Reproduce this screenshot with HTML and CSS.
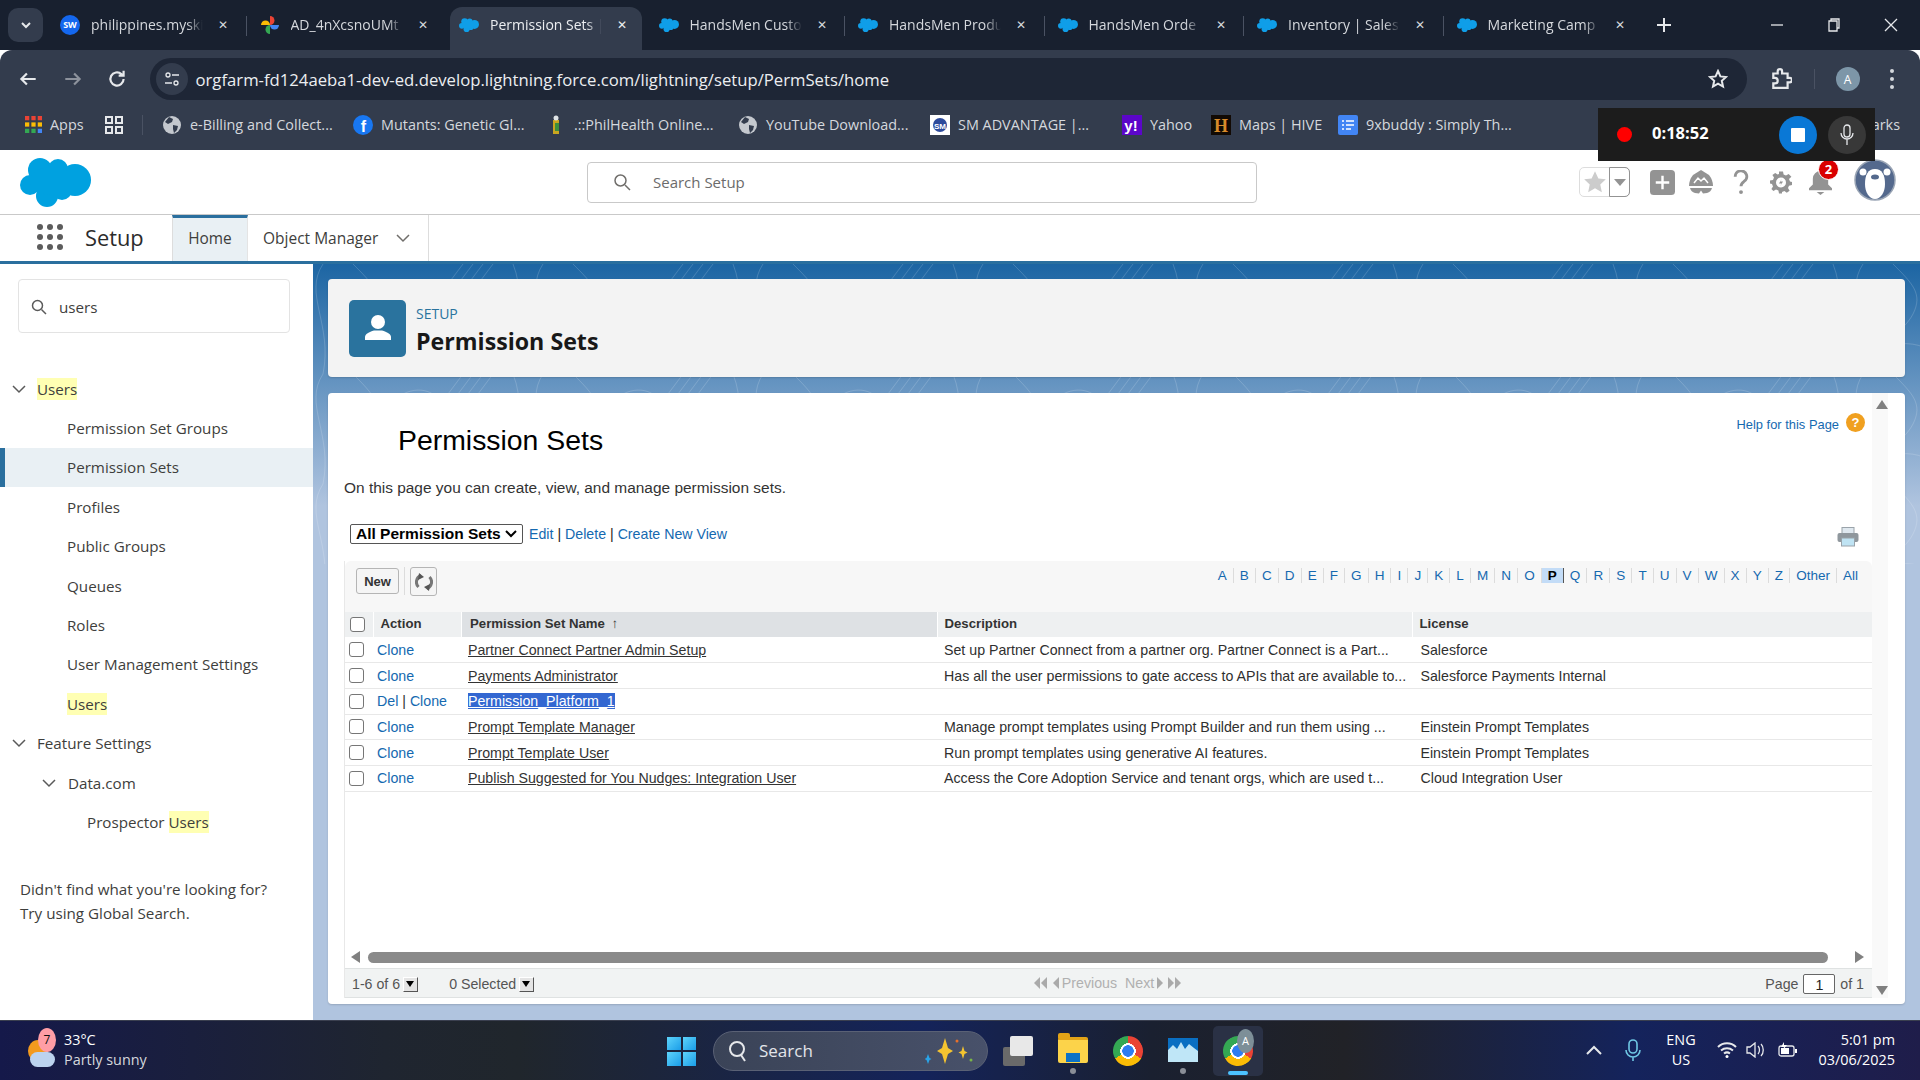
FILE: index.html
```html
<!DOCTYPE html>
<html lang="en">
<head>
  <meta charset="UTF-8" />
  <title>Permission Sets | Salesforce</title>
  <link rel="stylesheet" href="styles.css">
</head>
<body>

  <svg class="defs" width="0" height="0">
    <symbol id="cloud" viewBox="0 0 71 50">
      <circle cx="20" cy="13" r="12"/><circle cx="38" cy="12" r="10"/><circle cx="55" cy="23" r="16"/>
      <circle cx="27" cy="39" r="11"/><circle cx="10" cy="28" r="10"/><circle cx="42" cy="33" r="10"/>
      <ellipse cx="32" cy="24" rx="22" ry="14"/>
    </symbol>
    <symbol id="globe" viewBox="0 0 20 20">
      <circle cx="10" cy="10" r="9" fill="#c4c8ce"/>
      <path d="M7 2l4 2-1 3-4 2-3-2zM11 10l5 1-1 4-3 3-1-4z" fill="#333c4d"/>
    </symbol>
  </svg>

  <!-- Browser tabs -->
  <div class="tabstrip">
    <button class="tab-search"><svg width="12" height="12" viewBox="0 0 12 12"><path d="M2 4l4 4 4-4" class="line-w2"/></svg></button>
    <div class="tab"><span class="fav-sw">SW</span><span class="tab-title">philippines.myski</span><span class="tab-x">✕</span></div>
    <div class="tab"><svg class="fav" viewBox="0 0 20 20"><path d="M10 10V1a4.500 4.500 0 0 1 0 9z" fill="#ea4335"/><path d="M10 10h9a4.500 4.500 0 0 1-9 0z" fill="#4285f4"/><path d="M10 10v9a4.500 4.500 0 0 1 0-9z" fill="#34a853"/><path d="M10 10H1a4.500 4.500 0 0 1 9 0z" fill="#fbbc05"/></svg><span class="tab-title">AD_4nXcsnoUMt</span><span class="tab-x">✕</span></div>
    <div class="tab active"><svg class="fav sf"><use href="#cloud"/></svg><span class="tab-title">Permission Sets |</span><span class="tab-x">✕</span></div>
    <div class="tab"><svg class="fav sf"><use href="#cloud"/></svg><span class="tab-title">HandsMen Custo</span><span class="tab-x">✕</span></div>
    <div class="tab"><svg class="fav sf"><use href="#cloud"/></svg><span class="tab-title">HandsMen Produ</span><span class="tab-x">✕</span></div>
    <div class="tab"><svg class="fav sf"><use href="#cloud"/></svg><span class="tab-title">HandsMen Orde</span><span class="tab-x">✕</span></div>
    <div class="tab"><svg class="fav sf"><use href="#cloud"/></svg><span class="tab-title">Inventory | Sales</span><span class="tab-x">✕</span></div>
    <div class="tab"><svg class="fav sf"><use href="#cloud"/></svg><span class="tab-title">Marketing Camp</span><span class="tab-x">✕</span></div>
    <svg class="tab-plus" width="14" height="14" viewBox="0 0 14 14"><path d="M7 0v14M0 7h14" class="line-w2"/></svg>
    <div class="win-controls">
      <svg width="14" height="14" viewBox="0 0 14 14"><path d="M1 7h12" class="line-w1"/></svg>
      <svg width="14" height="14" viewBox="0 0 14 14"><path d="M2 3h8v10H2zM4 3V1h8v9h-2" class="line-w1"/></svg>
      <svg width="14" height="14" viewBox="0 0 14 14"><path d="M1 1l12 12M13 1L1 13" class="line-w1"/></svg>
    </div>
  </div>

  <!-- Address bar -->
  <div class="toolbar">
    <svg class="tool" viewBox="0 0 20 20"><path d="M17 10H4M9 5l-5 5 5 5" class="line-w2"/></svg>
    <svg class="tool dim" viewBox="0 0 20 20"><path d="M3 10h13M11 5l5 5-5 5" class="line-w2"/></svg>
    <svg class="tool" viewBox="0 0 20 20"><path d="M16 10a6 6 0 1 1-2-4.500L16 7M16 2.500V7h-4.500" class="line-w2"/></svg>
    <div class="omnibox">
      <span class="site-info"><svg width="18" height="18" viewBox="0 0 18 18"><circle cx="5" cy="5" r="2" class="line-w1"/><path d="M9 5h7M2 13h7" class="line-w1"/><circle cx="13" cy="13" r="2" class="line-w1"/></svg></span>
      <span class="url">orgfarm-fd124aeba1-dev-ed.develop.lightning.force.com/lightning/setup/PermSets/home</span>
      <svg class="star" width="20" height="20" viewBox="0 0 20 20"><path d="M10 2l2.400 5.400 5.600.6-4.200 3.800 1.200 5.700L10 14.600l-5 2.900 1.200-5.700L2 8l5.600-.6z" class="line-w2"/></svg>
    </div>
    <svg class="tool ext" viewBox="0 0 20 20"><path d="M3 5h4V3a2 2 0 0 1 4 0v2h5v4h2a2 2 0 0 1 0 4h-2v5H3v-4h1.500a2.500 2.500 0 0 0 0-5H3z" class="line-w2"/></svg>
    <span class="tool-sep"></span>
    <span class="profile">A</span>
    <span class="kebab"><i></i><i></i><i></i></span>
  </div>

  <!-- Bookmarks -->
  <div class="bookmarks">
    <span class="bm bm-apps">
      <svg class="bm-ico" viewBox="0 0 16 16">
        <g fill="#ea4335"><rect x="0" y="0" width="4" height="4"/><rect x="6" y="0" width="4" height="4"/><rect x="12" y="0" width="4" height="4"/></g>
        <g fill="#fbbc05"><rect x="0" y="6" width="4" height="4"/><rect x="6" y="6" width="4" height="4"/><rect x="12" y="6" width="4" height="4"/></g>
        <g fill="#34a853"><rect x="0" y="12" width="4" height="4"/><rect x="6" y="12" width="4" height="4"/></g><rect x="12" y="12" width="4" height="4" fill="#4285f4"/>
      </svg>Apps</span>
    <svg class="bm-grid" viewBox="0 0 18 18"><path d="M1 1h6v6H1zM11 1h6v6h-6zM1 11h6v6H1zM11 11h6v6h-6z" class="line-w2"/></svg>
    <span class="bm-sep"></span>
    <span class="bm w-e"><svg class="bm-ico"><use href="#globe"/></svg>e-Billing and Collect...</span>
    <span class="bm w-m"><svg class="bm-ico" viewBox="0 0 20 20"><circle cx="10" cy="10" r="10" fill="#1877f2"/><text x="10.500" y="17" class="fb-f">f</text></svg>Mutants: Genetic Gl...</span>
    <span class="bm w-p"><svg class="bm-ico" viewBox="0 0 20 20"><rect x="7" y="5" width="6" height="14" fill="#c9a61f"/><circle cx="10" cy="3" r="2.500" fill="#dfe3e6"/><rect x="9" y="8" width="4" height="8" fill="#3c8f3c"/></svg>.::PhilHealth Online...</span>
    <span class="bm w-y"><svg class="bm-ico"><use href="#globe"/></svg>YouTube Download...</span>
    <span class="bm w-s"><svg class="bm-ico" viewBox="0 0 20 20"><rect width="20" height="20" fill="#fff"/><circle cx="10" cy="10" r="7" fill="#2d4a9b"/><text x="10" y="14" class="sm-t">SM</text></svg>SM ADVANTAGE |...</span>
    <span class="bm w-h"><svg class="bm-ico" viewBox="0 0 20 20"><rect width="20" height="20" fill="#5b06c9"/><text x="9" y="16" class="yh-t">y!</text></svg>Yahoo</span>
    <span class="bm w-v"><svg class="bm-ico" viewBox="0 0 20 20"><rect width="20" height="20" fill="#120a04"/><text x="10" y="17" class="hv-t">H</text></svg>Maps | HIVE</span>
    <span class="bm"><svg class="bm-ico" viewBox="0 0 20 20"><rect width="20" height="20" rx="2" fill="#4285f4"/><path d="M4 6h2M8 6h8M4 10h2M8 10h8M4 14h2M8 14h5" class="line-doc"/></svg>9xbuddy : Simply Th...</span>
    <span class="bm bm-more">arks</span>
  </div>

  <!-- Screen recorder overlay -->
  <div class="recorder">
    <span class="rec-dot"></span>
    <span class="rec-time">0:18:52</span>
    <span class="rec-stop"><i></i></span>
    <span class="rec-mic"><svg width="18" height="24" viewBox="0 0 18 24"><rect x="6" y="2" width="6" height="12" rx="3" class="line-w1"/><path d="M3 10a6 6 0 0 0 12 0M9 16v6" class="line-w1"/></svg></span>
  </div>

  <!-- Salesforce global header -->
  <header class="sf-top">
    <svg class="sf-logo"><use href="#cloud"/></svg>
    <div class="global-search">
      <svg width="18" height="18" viewBox="0 0 18 18"><circle cx="7.500" cy="7.500" r="5.500" class="ico-gray"/><path d="M12 12l5 5" class="ico-gray"/></svg>
      <span>Search Setup</span>
    </div>
    <div class="global-actions">
      <div class="fav-group">
        <span class="fav-star"><svg width="24" height="24" viewBox="0 0 20 20"><path d="M10 1l2.800 6 6.200.7-4.600 4.300 1.300 6.500L10 15.200l-5.700 3.300L5.600 12 1 7.700 7.200 7z" fill="#ccc"/></svg></span>
        <span class="fav-drop"><i></i></span>
      </div>
      <svg class="act plus" viewBox="0 0 26 26"><rect width="26" height="26" rx="4" fill="#939393"/><path d="M13 6v14M6 13h14" stroke="#fff" stroke-width="2.500"/></svg>
      <svg class="act trail" viewBox="0 0 24 24"><path d="M12 0l8 5q4 5 4 11H0q0-6 4-11z" fill="#939393"/><path d="M5 13l4-5 3 3 3-3 4 5" fill="none" stroke="#fff" stroke-width="1.500"/><path d="M1 18h22q-1 4-5 5l-4 .5-2-3-2 3-4-.5q-4-1-5-5z" fill="#939393"/></svg>
      <svg class="act help" viewBox="0 0 16 26"><path d="M2 7a6 6 0 1 1 9 5c-2 1.500-3 2.500-3 5" fill="none" stroke="#939393" stroke-width="3"/><circle cx="8" cy="23" r="2" fill="#939393"/></svg>
      <svg class="act gear" viewBox="0 0 22 22"><path d="M9 0h4l.6 3 2.400 1 2.600-1.600 2.800 2.800L19 7.600l1 2.400 2 .6v3l-3 .6-1 2.400 1.600 2.600-2.800 2-2.400-1.600-2.400 1L12 22H9l-.6-3-2.400-1-2.600 1.600-2-2L3 15l-1-2.400L0 12V9l3-.6L4 6 2.400 3.400l2.800-2L7.600 3 9 2.400z" fill="#939393"/><circle cx="11" cy="11" r="5" fill="#fff"/><path d="M12 7l-3 5h2.500L10 15l3-5h-2.500z" fill="#939393"/></svg>
      <div class="bell">
        <svg width="23" height="24" viewBox="0 0 24 25"><path d="M12 0a8 8 0 0 1 8 8v6l4 4v2H0v-2l4-4V8a8 8 0 0 1 8-8z" fill="#939393"/><path d="M8 22h8l-4 3z" fill="#939393"/></svg>
        <span class="bell-badge">2</span>
      </div>
      <svg class="avatar" viewBox="0 0 42 42">
        <circle cx="21" cy="21" r="20" fill="#54698d" stroke="#9aa5b5" stroke-width="1.500"/>
        <circle cx="9" cy="13" r="3.500" fill="#fff"/><circle cx="33" cy="13" r="3.500" fill="#fff"/>
        <path d="M21 10c7 0 10 6 10 15 0 8-4 15-10 15s-10-7-10-15c0-9 3-15 10-15z" fill="#fff"/>
        <ellipse cx="21" cy="18" rx="4" ry="2.500" fill="#54698d"/>
      </svg>
    </div>
  </header>

  <nav class="sf-nav">
    <span class="launcher"><i></i><i></i><i></i><i></i><i></i><i></i><i></i><i></i><i></i></span>
    <span class="app-name">Setup</span>
    <a class="nav-tab current">Home</a>
    <a class="nav-tab">Object Manager<svg width="14" height="14" viewBox="0 0 14 14"><path d="M1 4l6 6 6-6" class="ico-gray"/></svg></a>
  </nav>

  <div class="sf-body">

    <!-- Setup tree -->
    <aside class="sidebar">
      <div class="quick-find">
        <svg width="16" height="16" viewBox="0 0 16 16"><circle cx="6.500" cy="6.500" r="5" class="ico-dark"/><path d="M10.500 10.500L15 15" class="ico-dark"/></svg>
        <span>users</span>
      </div>
      <ul class="tree">
        <li class="lvl0"><svg class="caret" viewBox="0 0 14 14"><path d="M1 4l6 6 6-6" class="ico-dark"/></svg><mark>Users</mark></li>
        <li class="lvl1">Permission Set Groups</li>
        <li class="lvl1 selected">Permission Sets</li>
        <li class="lvl1">Profiles</li>
        <li class="lvl1">Public Groups</li>
        <li class="lvl1">Queues</li>
        <li class="lvl1">Roles</li>
        <li class="lvl1">User Management Settings</li>
        <li class="lvl1"><mark>Users</mark></li>
        <li class="lvl0"><svg class="caret" viewBox="0 0 14 14"><path d="M1 4l6 6 6-6" class="ico-dark"/></svg>Feature Settings</li>
        <li class="lvl1b"><svg class="caret" viewBox="0 0 14 14"><path d="M1 4l6 6 6-6" class="ico-dark"/></svg>Data.com</li>
        <li class="lvl2">Prospector <mark>Users</mark></li>
      </ul>
      <p class="not-found">Didn't find what you're looking for?<br>Try using Global Search.</p>
    </aside>

    <main class="main">
      <svg class="topo" width="1607" height="300">
        <defs>
          <pattern id="topo" width="220" height="110" patternUnits="userSpaceOnUse">
            <path d="M10 0c-20 30 10 60 0 110M40 0c20 20 30 30 20 50s-40 30-30 60M90 20c20-10 40 0 40 20s-30 30-40 10 0-30 0-30M150 0l-30 40M160 0l-30 40M170 0l-30 40M180 0l-30 40M200 110c-20-30 20-60 0-110M20 90c30-20 60-10 90 20M130 110c10-20 40-30 70-20" fill="none" stroke="#fff" stroke-opacity=".16"/>
          </pattern>
        </defs>
        <rect width="1607" height="300" fill="url(#topo)"/>
      </svg>

      <section class="page-header">
        <span class="ph-icon"><svg width="32" height="32" viewBox="0 0 32 32"><circle cx="16" cy="10" r="7" fill="#fff"/><path d="M3 28v-3c0-3 4-5 9-6.500h8c5 1.500 9 3.500 9 6.500v3z" fill="#fff"/></svg></span>
        <div class="ph-text">
          <div class="ph-crumb">SETUP</div>
          <div class="ph-title">Permission Sets</div>
        </div>
      </section>

      <section class="content">
        <div class="classic">
          <div class="page-head">
            <h1>Permission Sets</h1>
            <a class="help-link">Help for this Page<span class="help-q">?</span></a>
          </div>
          <p class="intro">On this page you can create, view, and manage permission sets.</p>

          <div class="view-row">
            <span class="view-select">All Permission Sets<svg width="12" height="8" viewBox="0 0 12 8"><path d="M1 1l5 5 5-5" class="line-black"/></svg></span>
            <a>Edit</a> | <a>Delete</a> | <a>Create New View</a>
            <svg class="printer" width="22" height="20" viewBox="0 0 22 20"><rect x="5" y="0.500" width="12" height="7" fill="#dfe8ef" stroke="#9aa3aa"/><rect x="0.500" y="6" width="21" height="9" rx="2" fill="#8f979d"/><rect x="4.500" y="11" width="13" height="8" fill="#bfe3f3" stroke="#9aa3aa"/></svg>
          </div>

          <div class="list-panel">
            <div class="list-tools">
              <button class="btn-new">New</button>
              <span class="tool-div"></span>
              <button class="btn-refresh"><svg width="18" height="18" viewBox="0 0 18 18"><path d="M3.500 14A7 7 0 0 1 6 2.500" class="refresh-a"/><path d="M14.500 4A7 7 0 0 1 12 15.500" class="refresh-b"/><path d="M4 0l5 4-6 3z" fill="#555"/><path d="M14 18l-5-4 6-3z" fill="#555"/></svg></button>
              <div class="alpha">
                <a>A</a><a>B</a><a>C</a><a>D</a><a>E</a><a>F</a><a>G</a><a>H</a><a>I</a><a>J</a><a>K</a><a>L</a><a>M</a><a>N</a><a>O</a><a class="on">P</a><a>Q</a><a>R</a><a>S</a><a>T</a><a>U</a><a>V</a><a>W</a><a>X</a><a>Y</a><a>Z</a><a>Other</a><a>All</a>
              </div>
            </div>

            <table class="list-table">
              <colgroup><col class="c-check"><col class="c-action"><col class="c-name"><col class="c-desc"><col class="c-lic"></colgroup>
              <thead>
                <tr><th><span class="cb"></span></th><th class="th-action">Action</th><th class="sorted">Permission Set Name <span class="sort-arrow">↑</span></th><th>Description</th><th>License</th></tr>
              </thead>
              <tbody>
                <tr><td><span class="cb"></span></td><td><a>Clone</a></td><td><u>Partner Connect Partner Admin Setup</u></td><td>Set up Partner Connect from a partner org. Partner Connect is a Part...</td><td>Salesforce</td></tr>
                <tr><td><span class="cb"></span></td><td><a>Clone</a></td><td><u>Payments Administrator</u></td><td>Has all the user permissions to gate access to APIs that are available to...</td><td>Salesforce Payments Internal</td></tr>
                <tr><td><span class="cb"></span></td><td><a>Del</a> | <a>Clone</a></td><td><u class="picked">Permission_Platform_1</u></td><td></td><td></td></tr>
                <tr><td><span class="cb"></span></td><td><a>Clone</a></td><td><u>Prompt Template Manager</u></td><td>Manage prompt templates using Prompt Builder and run them using ...</td><td>Einstein Prompt Templates</td></tr>
                <tr><td><span class="cb"></span></td><td><a>Clone</a></td><td><u>Prompt Template User</u></td><td>Run prompt templates using generative AI features.</td><td>Einstein Prompt Templates</td></tr>
                <tr><td><span class="cb"></span></td><td><a>Clone</a></td><td><u>Publish Suggested for You Nudges: Integration User</u></td><td>Access the Core Adoption Service and tenant orgs, which are used t...</td><td>Cloud Integration User</td></tr>
              </tbody>
            </table>

            <div class="hscroll">
              <i class="arr-left"></i>
              <span class="hthumb"></span>
              <i class="arr-right"></i>
            </div>

            <div class="pager">
              <div class="pg-left"><span>1-6 of 6</span><span class="pg-drop"></span><span class="pg-sel">0 Selected</span><span class="pg-drop"></span></div>
              <div class="pg-mid"><i class="tri-l"></i><i class="tri-l"></i><i class="tri-l gap"></i>Previous<span class="pg-next">Next</span><i class="tri-r gap"></i><i class="tri-r"></i><i class="tri-r"></i></div>
              <div class="pg-right">Page <span class="pg-input">1</span> of 1</div>
            </div>
          </div>
        </div>
        <div class="vscroll"><i class="arr-up"></i><i class="arr-down"></i></div>
      </section>
    </main>
  </div>

  <!-- Windows taskbar -->
  <footer class="taskbar">
    <div class="weather">
      <span class="wx-icon"><i class="wx-sun"></i><i class="wx-cloud"></i><b class="wx-badge">7</b></span>
      <div><div>33°C</div><div class="wx-sub">Partly sunny</div></div>
    </div>
    <div class="task-center">
      <span class="win-logo"><i></i><i></i><i></i><i></i></span>
      <div class="task-search">
        <svg width="20" height="22" viewBox="0 0 20 22"><circle cx="9" cy="9" r="7" class="line-w2"/><path d="M13 15l4 6" class="line-w2"/></svg>
        <span>Search</span>
        <svg class="sparkle" width="50" height="30" viewBox="0 0 50 30"><path d="M20 2l3 10 5 3-5 3-3 10-3-10-5-3 5-3z" fill="#f4c430"/><path d="M38 10l1.500 5 3 1.500-3 1.500-1.500 5-1.500-5-3-1.500 3-1.500z" fill="#f4c430"/><path d="M3 18l1.500 4 2 1-2 1L3 28l-1.500-4-2-1 2-1z" fill="#2aa4e8"/><circle cx="32" cy="5" r="1.500" fill="#e8702a"/><circle cx="46" cy="24" r="1.500" fill="#7ab648"/></svg>
      </div>
      <span class="task-app"><span class="ta-view"><i></i><i></i></span></span>
      <span class="task-app dot"><span class="ta-folder"><i></i></span></span>
      <span class="task-app"><span class="ta-chrome"></span></span>
      <span class="task-app dot"><span class="ta-chart"><svg width="30" height="24" viewBox="0 0 30 24"><rect width="30" height="24" fill="#0a6fc2"/><path d="M0 24V12l5-5 4 4 4-7 4 7 4-5 5 4 4 3v11z" fill="#bfe6f7"/></svg></span></span>
      <span class="task-app active"><span class="ta-chrome"></span><b class="ta-a">A</b></span>
    </div>
    <div class="tray">
      <svg width="18" height="10" viewBox="0 0 18 10"><path d="M2 9l7-7 7 7" class="line-w2"/></svg>
      <svg class="tray-mic" width="16" height="22" viewBox="0 0 16 22"><rect x="4" y="1" width="8" height="13" rx="4" class="line-mic"/><path d="M1 11a7 7 0 0 0 14 0M8 18v4" class="line-mic"/></svg>
      <div class="tray-lang">ENG<br>US</div>
      <svg class="tray-wifi" width="20" height="16" viewBox="0 0 20 16"><path d="M1 5c5-5 13-5 18 0M4 8.500c3.500-3 8.500-3 12 0M7 11.500c2-1.500 4-1.500 6 0" class="line-w2"/><circle cx="10" cy="14.500" r="1.500" fill="#fff"/></svg>
      <svg width="20" height="16" viewBox="0 0 20 16"><path d="M1 5h3l5-4v14l-5-4H1zM12 4c2 2 2 6 0 8M15 2c3 3 3 9 0 12" class="line-w1"/></svg>
      <svg class="tray-bat" width="20" height="16" viewBox="0 0 20 16"><rect x="1" y="4" width="15" height="10" rx="2" class="line-w1"/><rect x="3" y="6" width="8" height="6" fill="#fff"/><rect x="17" y="7" width="2" height="4" fill="#fff"/><path d="M6 0L3 5h3L5 8l4-5H6z" fill="#fff"/></svg>
      <div class="clock">5:01 pm<br>03/06/2025</div>
    </div>
  </footer>

</body>
</html>
```

FILE: styles.css
```css
* {
  box-sizing: border-box;
}

html, body {
  margin: 0;
  width: 1920px;
  height: 1080px;
  overflow: hidden;
}

body {
  display: flex;
  flex-direction: column;
  position: relative;
  font-family: "Open Sans", sans-serif;
  background: #fff;
}

.defs {
  position: absolute;
}

button {
  font-family: inherit;
  padding: 0;
}

/* shared strokes */
.line-w1 { fill: none; stroke: #e6e8eb; stroke-width: 1.3; }
.line-w2 { fill: none; stroke: #e6e8eb; stroke-width: 2; }
.line-doc { fill: none; stroke: #fff; stroke-width: 1.5; }
.line-black { fill: none; stroke: #000; stroke-width: 2; }
.line-mic { fill: none; stroke: #6fc7e4; stroke-width: 1.6; }
.ico-gray { fill: none; stroke: #706e6b; stroke-width: 1.5; }
.ico-dark { fill: none; stroke: #5a5a5a; stroke-width: 1.5; }

/* Tab strip */
.tabstrip {
  height: 50px;
  background: #18202f;
  display: flex;
  align-items: flex-end;
  padding-left: 8px;
  color: #d5d8dd;
  flex-shrink: 0;
}

.tab-search {
  width: 35px;
  height: 34px;
  margin: 0 8px 8px 0;
  border: none;
  border-radius: 10px;
  background: #333c4d;
  display: flex;
  align-items: center;
  justify-content: center;
  flex-shrink: 0;
}

.tab {
  width: 199.5px;
  height: 43px;
  flex-shrink: 0;
  display: flex;
  align-items: center;
  padding: 0 14px 0 9px;
  font-size: 14px;
  position: relative;
}

.tab + .tab::before {
  content: "";
  position: absolute;
  left: -5px;
  top: 9px;
  height: 20px;
  width: 1px;
  background: #4a5263;
}

.tab.active {
  width: 192px;
  background: #333c4d;
  border-radius: 12px 12px 0 0;
  color: #eceef1;
}

.tab.active + .tab {
  width: 207px;
  padding-left: 16.5px;
}

.tab.active::before,
.tab.active + .tab::before {
  display: none;
}

.tab > * {
  position: relative;
  top: -4px;
}

.fav {
  width: 20px;
  height: 20px;
  flex-shrink: 0;
}

.fav.sf {
  fill: #0f9ee8;
}

.fav-sw {
  width: 20px;
  height: 20px;
  flex-shrink: 0;
  border-radius: 50%;
  background: #1467ee;
  color: #fff;
  font-size: 9px;
  font-weight: 700;
  display: flex;
  align-items: center;
  justify-content: center;
}

.tab-title {
  width: 112px;
  margin-left: 11px;
  white-space: nowrap;
  -webkit-mask-image: linear-gradient(to right, #000 86%, transparent);
  mask-image: linear-gradient(to right, #000 86%, transparent);
}

.tab-x {
  margin-left: 15px;
  font-size: 12px;
}

.tab-plus {
  margin: 0 0 18px 10px;
  flex-shrink: 0;
}

.win-controls {
  margin-left: auto;
  width: 249px;
  height: 50px;
  padding: 18px 22px 0 99px;
  display: flex;
  justify-content: space-between;
  align-self: flex-start;
}

/* Toolbar */
.toolbar {
  height: 50px;
  background: #333c4d;
  border-radius: 12px 12px 0 0;
  display: flex;
  align-items: center;
  padding: 8px 0 0 17px;
  flex-shrink: 0;
}

.tool {
  width: 22px;
  height: 22px;
  margin-right: 22.5px;
  flex-shrink: 0;
}

.tool.dim {
  opacity: .5;
}

.omnibox {
  width: 1597px;
  height: 42px;
  margin-left: -1px;
  background: #1e2636;
  border-radius: 21px;
  display: flex;
  align-items: center;
  padding: 0 18.5px 0 6px;
  flex-shrink: 0;
}

.site-info {
  width: 32px;
  height: 32px;
  border-radius: 50%;
  background: #333c4d;
  display: flex;
  align-items: center;
  justify-content: center;
}

.url {
  margin-left: 8px;
  font-size: 16.7px;
  color: #eceef1;
  white-space: nowrap;
}

.star {
  margin-left: auto;
}

.tool.ext {
  margin: 0 0 0 23.5px;
}

.tool-sep {
  width: 1px;
  height: 20px;
  background: #4a5263;
  margin-left: 21.5px;
}

.profile {
  width: 24px;
  height: 24px;
  margin-left: 21px;
  border-radius: 50%;
  background: #7d96a8;
  color: #fff;
  font-size: 12px;
  display: flex;
  align-items: center;
  justify-content: center;
}

.kebab {
  margin-left: 30px;
  display: flex;
  flex-direction: column;
  gap: 4px;
}

.kebab i {
  width: 4px;
  height: 4px;
  border-radius: 50%;
  background: #d5d8dd;
}

/* Bookmarks */
.bookmarks {
  height: 50px;
  background: #333c4d;
  display: flex;
  align-items: center;
  padding: 0 0 0 25px;
  font-size: 14.4px;
  color: #d5d8dd;
  white-space: nowrap;
  flex-shrink: 0;
  border-bottom: 1px solid #333c4d;
}

.bm {
  display: flex;
  align-items: center;
  gap: 8px;
}

.bm-ico {
  width: 20px;
  height: 20px;
  flex-shrink: 0;
}

.bm-apps {
  width: 80px;
}

.bm-apps .bm-ico {
  width: 17px;
  height: 17px;
}

.bm-grid {
  width: 18px;
  height: 18px;
}

.bm-sep {
  width: 1px;
  height: 20px;
  background: #4a5263;
  margin: 0 19px 0 19px;
}

.w-e { width: 191px; }
.w-m { width: 193px; }
.w-p { width: 192px; }
.w-y { width: 192px; }
.w-s { width: 192px; }
.w-h { width: 89px; }
.w-v { width: 127px; }

.bm-more {
  margin-left: auto;
  padding-right: 20px;
}

.fb-f {
  font: 700 16px "Liberation Sans", sans-serif;
  fill: #fff;
  text-anchor: middle;
}

.sm-t {
  font: 700 8px "Liberation Sans", sans-serif;
  fill: #fff;
  text-anchor: middle;
}

.yh-t {
  font: 700 15px "Liberation Sans", sans-serif;
  fill: #fff;
  text-anchor: middle;
}

.hv-t {
  font: 700 18px "Liberation Serif", serif;
  fill: #d88a2a;
  text-anchor: middle;
}

/* Recorder overlay */
.recorder {
  position: absolute;
  left: 1598px;
  top: 108px;
  width: 277px;
  height: 53px;
  background: #1c1c1c;
  display: flex;
  align-items: center;
  padding-left: 19px;
  color: #fff;
  z-index: 5;
}

.rec-dot {
  width: 15px;
  height: 15px;
  border-radius: 50%;
  background: #f00;
}

.rec-time {
  margin: -5px 0 0 20px;
  width: 115px;
  font-size: 16.5px;
  font-weight: 700;
}

.rec-stop {
  width: 38px;
  height: 38px;
  margin-left: 12px;
  border-radius: 50%;
  background: #0a78d6;
  display: flex;
  align-items: center;
  justify-content: center;
}

.rec-stop i {
  width: 14px;
  height: 14px;
  background: #fff;
  border-radius: 1px;
}

.rec-mic {
  width: 38px;
  height: 38px;
  margin-left: 11px;
  border-radius: 50%;
  background: #383838;
  display: flex;
  align-items: center;
  justify-content: center;
}

/* Salesforce header */
.sf-top {
  height: 65px;
  background: #fff;
  border-bottom: 1px solid #c9c9c9;
  display: flex;
  align-items: center;
  position: relative;
  flex-shrink: 0;
}

.sf-logo {
  width: 71px;
  height: 50px;
  margin-left: 20px;
  fill: #00a1e0;
}

.global-search {
  width: 670px;
  height: 41px;
  margin: 0 0 0 496px;
  border: 1px solid #c9c9c9;
  border-radius: 4px;
  display: flex;
  align-items: center;
  padding-left: 25px;
  color: #6b6b6b;
  font-size: 15px;
  gap: 22px;
}

.global-actions {
  display: flex;
  align-items: center;
  margin-left: 322px;
}

.fav-group {
  display: flex;
  height: 30px;
  width: 51px;
  border: 1px solid #ddd;
  border-radius: 5px;
  margin-top: 0;
}

.fav-star {
  width: 29px;
  display: flex;
  align-items: center;
  justify-content: center;
}

.fav-drop {
  width: 21px;
  border: 1px solid #939393;
  border-radius: 0 5px 5px 0;
  margin: -1px -1px -1px 0;
  display: flex;
  align-items: center;
  justify-content: center;
}

.fav-drop i {
  border-left: 6px solid transparent;
  border-right: 6px solid transparent;
  border-top: 7px solid #939393;
}

.act {
  flex-shrink: 0;
}

.plus { width: 25px; height: 25px; margin-left: 20px; }
.trail { width: 24px; height: 24px; margin-left: 14px; }
.help { width: 16px; height: 25px; margin-left: 20px; }
.gear { width: 22px; height: 23px; margin-left: 21px; }

.bell {
  position: relative;
  margin-left: 17px;
  display: flex;
  margin-top: 1px;
}

.bell-badge {
  position: absolute;
  left: 9px;
  top: -12px;
  width: 21px;
  height: 21px;
  border-radius: 50%;
  background: #d90000;
  color: #fff;
  font-size: 13px;
  font-weight: 700;
  display: flex;
  align-items: center;
  justify-content: center;
  border: 1px solid #fff;
}

.avatar {
  width: 42px;
  height: 42px;
  margin-left: 22px;
  margin-top: -4px;
}

/* Nav */
.sf-nav {
  height: 49px;
  background: #fff;
  border-bottom: 3px solid #2a6f9e;
  display: flex;
  align-items: stretch;
  flex-shrink: 0;
}

.launcher {
  width: 26px;
  height: 26px;
  margin: 9px 0 0 37px;
  display: grid;
  grid-template-columns: repeat(3, 6px);
  grid-auto-rows: 6px;
  gap: 4px;
}

.launcher i {
  border-radius: 50%;
  background: #5c5c5c;
}

.app-name {
  width: 87px;
  margin-left: 22px;
  font-size: 21.8px;
  color: #2b2b2b;
  line-height: 45px;
}

.nav-tab {
  display: flex;
  align-items: center;
  gap: 18px;
  padding: 0 18px 0 15px;
  font-size: 15.5px;
  color: #3e3e3c;
  border-right: 1px solid #ddd;
}

.nav-tab.current {
  width: 76px;
  padding: 0 0 3px;
  justify-content: center;
  font-size: 15.4px;
  background: #e9f0f4;
  border-top: 3px solid #2a6f9e;
  border-left: 1px solid #ddd;
  border-right: 1px solid #e4e4e4;
}

/* Body */
.sf-body {
  flex: 1;
  display: flex;
  min-height: 0;
}

.sidebar {
  width: 313px;
  background: #fff;
  flex-shrink: 0;
  padding-top: 15px;
  font-size: 15.2px;
  color: #3e3e3c;
}

.quick-find {
  width: 272px;
  height: 54px;
  margin-left: 18px;
  border: 1px solid #e3e3e3;
  border-radius: 4px;
  display: flex;
  align-items: center;
  padding: 2px 0 0 12px;
  gap: 12px;
  color: #3e3e3c;
}

.tree {
  list-style: none;
  margin: 36px 0 0;
  padding: 0;
}

.tree li {
  height: 39.4px;
  display: flex;
  align-items: center;
  white-space: pre;
}

.caret {
  width: 14px;
  height: 14px;
  flex-shrink: 0;
}

.lvl0 { padding-left: 12px; }
.lvl0 .caret { margin-right: 11px; }
.lvl1 { padding-left: 67px; }
.lvl1b { padding-left: 42px; }
.lvl1b .caret { margin-right: 12px; }
.lvl2 { padding-left: 87px; }

.tree mark {
  background: #ffffb3;
  color: inherit;
  padding: 0;
  line-height: 22px;
}

.tree .selected {
  background: #e9f0f4;
  border-left: 5px solid #2a6f9e;
  padding-left: 62px;
}

.not-found {
  margin: 35px 0 0 20px;
  line-height: 24px;
}

/* Main */
.main {
  flex: 1;
  position: relative;
  padding: 15px 15px 16px;
  display: flex;
  flex-direction: column;
  gap: 16px;
  background: linear-gradient(#1c65a3 0, #b0c4df 32%);
}

.topo {
  position: absolute;
  left: 0;
  top: 0;
}

.page-header,
.content {
  position: relative;
  background: #fff;
  border-radius: 4px;
  box-shadow: 0 1px 2px rgba(0, 0, 0, .15);
}

.page-header {
  height: 98px;
  background: #f3f3f3;
  display: flex;
  align-items: center;
  padding-left: 21px;
  gap: 10px;
}

.ph-icon {
  width: 57px;
  height: 57px;
  border-radius: 5px;
  background: #2a739e;
  display: flex;
  align-items: center;
  justify-content: center;
}

.ph-text {
  padding-top: 5px;
}

.ph-crumb {
  font-size: 14px;
  color: #2a739e;
  line-height: 21px;
}

.ph-title {
  font-size: 23.2px;
  font-weight: 700;
  color: #181818;
  line-height: 34px;
}

.content {
  flex: 1;
  display: flex;
  padding: 0 17px 6px 16px;
  min-height: 0;
  font: 14px "Liberation Sans", Arial, sans-serif;
  color: #222;
}

.classic {
  flex: 1;
  display: flex;
  flex-direction: column;
  min-width: 0;
}

.classic a {
  color: #1569b0;
}

.page-head {
  height: 77px;
  display: flex;
  justify-content: space-between;
  padding: 30px 0 0 54px;
}

.page-head h1 {
  margin: 0;
  font-size: 28.4px;
  font-weight: 400;
  color: #000;
  line-height: 34px;
}

.help-link {
  display: flex;
  align-items: center;
  height: 20px;
  margin: -9px 7px 0 0;
  font-size: 12.9px;
  gap: 7px;
}

.help-q {
  width: 19px;
  height: 19px;
  margin-top: -3px;
  border-radius: 50%;
  background: #f0a020;
  color: #fff;
  font-size: 13px;
  font-weight: 700;
  display: flex;
  align-items: center;
  justify-content: center;
}

.intro {
  margin: 9px 0 0;
  font-size: 15.45px;
  line-height: 18px;
  color: #333;
}

.view-row {
  height: 20px;
  margin: 27px 0 17px 6px;
  display: flex;
  align-items: center;
  white-space: pre;
  font-size: 14.2px;
}

.view-select {
  width: 173px;
  height: 20px;
  margin-right: 6px;
  border: 1px solid #555;
  border-radius: 2px;
  font-weight: 700;
  font-size: 15.5px;
  color: #000;
  display: flex;
  align-items: center;
  justify-content: space-between;
  padding: 0 5px;
}

.printer {
  margin: 5px 13px 0 auto;
}

.list-panel {
  flex: 1;
  display: flex;
  flex-direction: column;
  border-left: 1px solid #e8e8e8;
  min-height: 0;
}

.list-tools {
  height: 51px;
  background: #f7f7f7;
  border-radius: 6px 6px 0 0;
  display: flex;
  align-items: flex-start;
  padding: 6px 14px 0 11px;
}

.btn-new {
  width: 43px;
  height: 26px;
  margin-top: 1px;
  border: 1px solid #b5b5b5;
  border-radius: 3px;
  background: #f5f5f5;
  font: 700 13px "Liberation Sans", sans-serif;
  color: #333;
}

.tool-div {
  width: 1px;
  height: 28px;
  background: #dcdcdc;
  margin: 0 5px;
}

.btn-refresh {
  width: 27px;
  height: 29px;
  border: 1px solid #b5b5b5;
  border-radius: 3px;
  background: #f5f5f5;
  display: flex;
  align-items: center;
  justify-content: center;
}

.refresh-a, .refresh-b {
  fill: none;
  stroke: #777;
  stroke-width: 3;
}

.alpha {
  margin-left: auto;
  display: flex;
  font-size: 13.5px;
  line-height: 15px;
  margin-top: 1px;
}

.alpha a {
  padding: 0 6.05px;
  border-left: 1px solid #dcdcdc;
}

.alpha a:first-child {
  border-left: none;
}

.alpha a:last-child {
  padding-right: 0;
}

.alpha .on {
  background: #c3dcf7;
  color: #000;
  font-weight: 700;
  border-right: 1px solid #555;
}

.alpha .on + a {
  border-left: none;
}

.list-table {
  width: 100%;
  table-layout: fixed;
  border-collapse: collapse;
  font-size: 14.2px;
}

.c-check { width: 28px; }
.c-action { width: 88px; }
.c-name { width: 476px; }
.c-desc { width: 475px; }

.list-table th {
  height: 25px;
  text-align: left;
  font-size: 13.2px;
  color: #333;
  background: #eef0f1;
  padding: 0 0 2px 7px;
  border-left: 1px solid #fff;
}

.list-table th:first-child {
  padding: 0 0 0 5px;
  border-left: none;
}

.list-table th.sorted {
  background: #dee1e4;
  padding-left: 8.5px;
}

.sort-arrow {
  margin-left: 3px;
}

.list-table td {
  height: 25.7px;
  padding: 0 0 0 7px;
  border-bottom: 1px solid #e8e8e8;
  white-space: nowrap;
  overflow: hidden;
  color: #2f2f2f;
}

.list-table td:first-child {
  padding-left: 4px;
}

.list-table td:nth-child(2) {
  padding-left: 4px;
}

.list-table td:last-child {
  padding-left: 8.5px;
}

.list-table u {
  color: #333;
}

.list-table .picked {
  background: #3367d1;
  color: #fff;
}

.cb {
  display: block;
  width: 15px;
  height: 15px;
  border: 1px solid #767676;
  border-radius: 3px;
  background: #fff;
}

.hscroll {
  margin-top: auto;
  height: 20px;
  display: flex;
  align-items: center;
  padding: 0 8px 2px 6px;
}

.arr-left {
  border-top: 6px solid transparent;
  border-bottom: 6px solid transparent;
  border-right: 9px solid #808080;
}

.hthumb {
  width: 1460px;
  height: 11px;
  margin-left: 8px;
  border-radius: 6px;
  background: #8a8a8a;
}

.arr-right {
  margin-left: auto;
  border-top: 6px solid transparent;
  border-bottom: 6px solid transparent;
  border-left: 9px solid #808080;
}

.pager {
  height: 30px;
  background: #f1f3f3;
  border-top: 1px solid #dfe2e2;
  border-bottom: 1px solid #dfe2e2;
  display: grid;
  grid-template-columns: 1fr auto 1fr;
  align-items: center;
  padding: 2px 8px 0 7px;
  font-size: 14.2px;
  color: #555;
}

.pg-left {
  display: flex;
  align-items: center;
}

.pg-drop {
  width: 15px;
  height: 15px;
  margin-left: 3px;
  background: #e4e4e4;
  border: 1px solid;
  border-color: #fff #555 #555 #fff;
  position: relative;
}

.pg-drop::after {
  content: "";
  position: absolute;
  left: 2px;
  top: 3px;
  border-left: 4px solid transparent;
  border-right: 4px solid transparent;
  border-top: 6px solid #000;
}

.pg-sel {
  margin-left: 31px;
}

.pg-mid {
  display: flex;
  align-items: center;
  color: #b0b0b0;
  margin-top: -3px;
}

.pg-next {
  margin-left: 8px;
}

.tri-l, .tri-r {
  border-top: 6px solid transparent;
  border-bottom: 6px solid transparent;
  margin-right: 1px;
}

.tri-l { border-right: 6px solid #aaa; }
.tri-r { border-left: 6px solid #aaa; }
.tri-l.gap { margin: 0 3px 0 5px; }
.tri-r.gap { margin: 0 5px 0 3px; }

.pg-right {
  display: flex;
  align-items: center;
  justify-content: flex-end;
  white-space: pre;
}

.pg-input {
  width: 32px;
  height: 20px;
  margin: 0 1px;
  border: 1px solid #666;
  border-radius: 2px;
  background: #fff;
  color: #222;
  text-align: center;
  line-height: 20px;
}

.vscroll {
  width: 16px;
  background: #f9f9f9;
  display: flex;
  flex-direction: column;
  justify-content: space-between;
  align-items: center;
  padding: 7px 0 3px 3px;
}

.arr-up {
  border-left: 6px solid transparent;
  border-right: 6px solid transparent;
  border-bottom: 9px solid #808080;
}

.arr-down {
  border-left: 6px solid transparent;
  border-right: 6px solid transparent;
  border-top: 9px solid #808080;
}

/* Taskbar */
.taskbar {
  height: 60px;
  flex-shrink: 0;
  border-top: 1px solid #3a3f4f;
  background: linear-gradient(90deg, #15194a 0, #1f2530 20%, #20262c 27%, #14235a 48%, #1a2030 60%, #212227 70%, #14235c 85%, #1f1d4a 100%);
  display: flex;
  align-items: center;
  color: #fff;
  font-size: 14.4px;
  position: relative;
}

.weather {
  display: flex;
  align-items: center;
  gap: 9px;
  margin: -2px 0 0 28px;
  line-height: 20px;
}

.wx-icon {
  position: relative;
  width: 27px;
  height: 36px;
  display: block;
}

.wx-sun {
  position: absolute;
  left: 0;
  top: 8px;
  width: 20px;
  height: 22px;
  border-radius: 50%;
  background: #f39a1e;
}

.wx-cloud {
  position: absolute;
  left: 2px;
  top: 20px;
  width: 25px;
  height: 15px;
  border-radius: 8px;
  background: #bcd3ef;
}

.wx-badge {
  position: absolute;
  left: 10px;
  top: -4px;
  width: 18px;
  height: 24px;
  border-radius: 50%;
  background: #ff9ea6;
  color: #111;
  font-size: 12px;
  font-weight: 400;
  text-align: center;
  line-height: 24px;
}

.wx-sub {
  color: #d5d8dd;
}

.task-center {
  position: absolute;
  left: 667px;
  top: 0;
  height: 60px;
  display: flex;
  align-items: center;
}

.win-logo {
  width: 29px;
  height: 29px;
  display: grid;
  grid-template-columns: 1fr 1fr;
  gap: 2px;
}

.win-logo i {
  background: linear-gradient(135deg, #5ed4fb, #1a9de8);
}

.task-search {
  width: 275px;
  height: 40px;
  margin-left: 17px;
  border-radius: 20px;
  background: linear-gradient(90deg, #3a4357, #48516a);
  border: 1px solid #5a6175;
  display: flex;
  align-items: center;
  padding-left: 14px;
  font-size: 17px;
  color: #e3e5ea;
  gap: 11px;
}

.task-search span {
  margin-top: -2px;
}

.sparkle {
  margin-left: auto;
  margin-right: 12px;
}

.task-app {
  width: 50px;
  height: 50px;
  margin-left: 5px;
  position: relative;
  display: flex;
  align-items: center;
  justify-content: center;
}

.task-app.dot::after {
  content: "";
  position: absolute;
  left: 22px;
  bottom: 2px;
  width: 6px;
  height: 6px;
  border-radius: 50%;
  background: #8a8e97;
}

.task-app.active {
  background: #2a3145;
  border-radius: 5px;
}

.task-app.active::after {
  content: "";
  position: absolute;
  left: 15px;
  bottom: 1px;
  width: 20px;
  height: 4px;
  border-radius: 2px;
  background: #4cc2ff;
}

.ta-view {
  position: relative;
  width: 30px;
  height: 30px;
}

.ta-view i {
  position: absolute;
  border-radius: 2px;
}

.ta-view i:first-child {
  left: 0;
  top: 11px;
  width: 22px;
  height: 19px;
  background: #6a6a6a;
}

.ta-view i:last-child {
  left: 7px;
  top: 0;
  width: 23px;
  height: 20px;
  background: #e8e8e8;
}

.ta-folder {
  position: relative;
  width: 30px;
  height: 26px;
  margin-top: -2px;
  background: #fcd34a;
  border-top: 3px solid #e2a317;
  border-radius: 2px;
}

.ta-folder::before {
  content: "";
  position: absolute;
  left: 0;
  top: -7px;
  width: 12px;
  height: 5px;
  background: #e2a317;
  border-radius: 2px 2px 0 0;
}

.ta-folder i {
  position: absolute;
  left: 8px;
  bottom: 1px;
  width: 14px;
  height: 9px;
  background: #0c72c7;
}

.ta-chrome {
  width: 30px;
  height: 30px;
  margin-top: -1px;
  border-radius: 50%;
  background:
    radial-gradient(circle, #2f7df0 0, #2f7df0 26%, #fff 28%, #fff 36%, transparent 37%),
    conic-gradient(from 30deg, #ea4335 0 120deg, #fbbc05 120deg 240deg, #34a853 240deg 360deg);
  transform: rotate(-30deg);
}

.ta-chart {
  width: 30px;
  height: 24px;
  margin-top: -2px;
  display: flex;
}

.ta-a {
  position: absolute;
  right: 9px;
  top: 3px;
  width: 17px;
  height: 24px;
  border-radius: 50%;
  background: #7d8f98;
  font-size: 11px;
  font-weight: 400;
  text-align: center;
  line-height: 24px;
}

.tray {
  margin: -1px 0 0 auto;
  display: flex;
  align-items: center;
  padding-right: 25px;
  line-height: 20px;
}

.tray-mic {
  margin-left: 22px;
}

.tray-lang {
  margin: 0 21px 0 25px;
  text-align: center;
}

.tray-wifi {
  margin-right: 9px;
}

.tray-bat {
  margin-left: 12px;
}

.clock {
  margin-left: 21px;
  text-align: right;
}
```
